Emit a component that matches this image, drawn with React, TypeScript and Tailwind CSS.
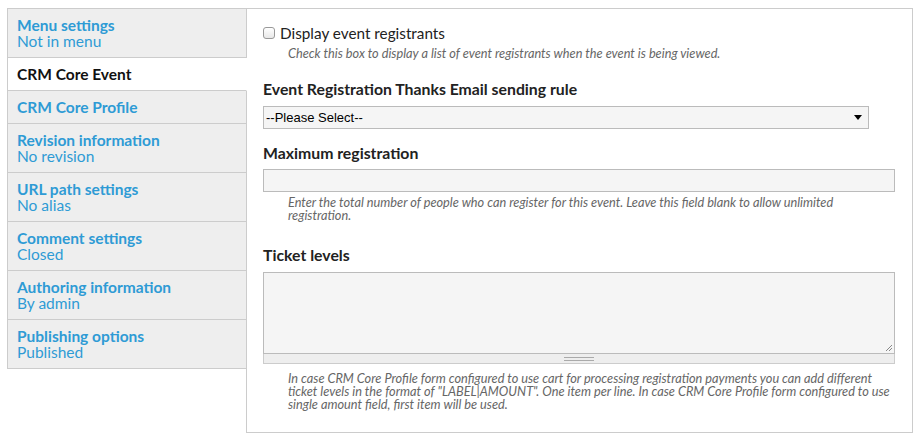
import React from "react";

interface TabItem {
  title: string;
  summary?: string;
  active?: boolean;
}

const tabs: TabItem[] = [
  { title: "Menu settings", summary: "Not in menu" },
  { title: "CRM Core Event", active: true },
  { title: "CRM Core Profile" },
  { title: "Revision information", summary: "No revision" },
  { title: "URL path settings", summary: "No alias" },
  { title: "Comment settings", summary: "Closed" },
  { title: "Authoring information", summary: "By admin" },
  { title: "Publishing options", summary: "Published" },
];

const Description = ({ children }: { children: React.ReactNode }) => (
  <div className="pl-[25px] text-[12.75px] leading-[13px] italic text-[#666]">
    {children}
  </div>
);

export default function App() {
  return (
    <div
      className="w-[921px] h-[438px] bg-white pl-[7px] pt-[8px] flex items-start"
      style={{ fontFamily: "Lato, 'Open Sans', sans-serif" }}
    >
      {/* Vertical tabs */}
      <ul className="relative z-10 w-[240px] border-l border-t border-[#ccc] flex flex-col">
        {tabs.map((tab) => (
          <li
            key={tab.title}
            className={`pl-[9px] pr-[10px] py-[8px] border-b border-r border-[#ccc] text-[15.5px] leading-[16px] ${
              tab.active ? "bg-white border-r-white" : "bg-[#eee]"
            }`}
          >
            <div
              className={`font-bold ${
                tab.active ? "text-[#111]" : "text-[#2e9bd5]"
              }`}
            >
              {tab.title}
            </div>
            {tab.summary && (
              <div className="text-[#2e9bd5]">{tab.summary}</div>
            )}
          </li>
        ))}
      </ul>

      {/* Panel */}
      <div className="-ml-px w-[667px] h-[425px] border border-[#ccc] pl-[16px] pr-[16px] pt-[15px]">
        <label className="flex items-center gap-[5px] text-[15.3px] leading-[18px] text-[#222]">
          <span className="w-[12px] h-[12px] rounded-[3px] border border-[#999] bg-gradient-to-b from-white to-[#e8e8e8]" />
          Display event registrants
        </label>
        <div className="mt-[5px]">
          <Description>
            Check this box to display a list of event registrants when the
            event is being viewed.
          </Description>
        </div>

        <div className="mt-[20px] text-[15.8px] leading-[18px] font-bold text-[#222]">
          Event Registration Thanks Email sending rule
        </div>
        <div className="mt-[8px] w-[606px] h-[23px] border border-[#bbb] bg-[#f5f5f5] flex items-center justify-between pl-[2px] pr-[6px]">
          <span
            className="text-[13px] text-black"
            style={{ fontFamily: "'Liberation Sans', Arial, sans-serif" }}
          >
            --Please Select--
          </span>
          <span className="w-0 h-0 border-l-[4px] border-r-[4px] border-t-[5px] border-l-transparent border-r-transparent border-t-black" />
        </div>

        <div className="mt-[15px] text-[15.8px] leading-[18px] font-bold text-[#222]">
          Maximum registration
        </div>
        <div className="mt-[7px] w-[632px] h-[23px] border border-[#bbb] bg-[#f5f5f5]" />
        <div className="mt-[4px] w-[632px]">
          <Description>
            Enter the total number of people who can register for this event.
            Leave this field blank to allow unlimited registration.
          </Description>
        </div>

        <div className="mt-[24px] text-[15.8px] leading-[18px] font-bold text-[#222]">
          Ticket levels
        </div>
        <div className="mt-[8px] w-[632px]">
          <div className="relative h-[82px] border border-[#bbb] bg-[#f5f5f5]">
            <svg
              className="absolute right-[1px] bottom-[1px]"
              width="8"
              height="8"
              viewBox="0 0 8 8"
            >
              <path d="M7 1 L1 7 M7 4 L4 7" stroke="#888" strokeWidth="1" />
            </svg>
          </div>
          <div className="h-[10px] border border-t-0 border-[#ccc] bg-[#eee] flex flex-col items-center justify-center gap-[2px]">
            <span className="w-[30px] h-px bg-[#aaa]" />
            <span className="w-[30px] h-px bg-[#aaa]" />
          </div>
        </div>
        <div className="mt-[8px] w-[632px]">
          <Description>
            In case CRM Core Profile form configured to use cart for processing
            registration payments you can add different ticket levels in the
            format of "LABEL|AMOUNT". One item per line. In case CRM Core
            Profile form configured to use single amount field, first item will
            be used.
          </Description>
        </div>
      </div>
    </div>
  );
}
